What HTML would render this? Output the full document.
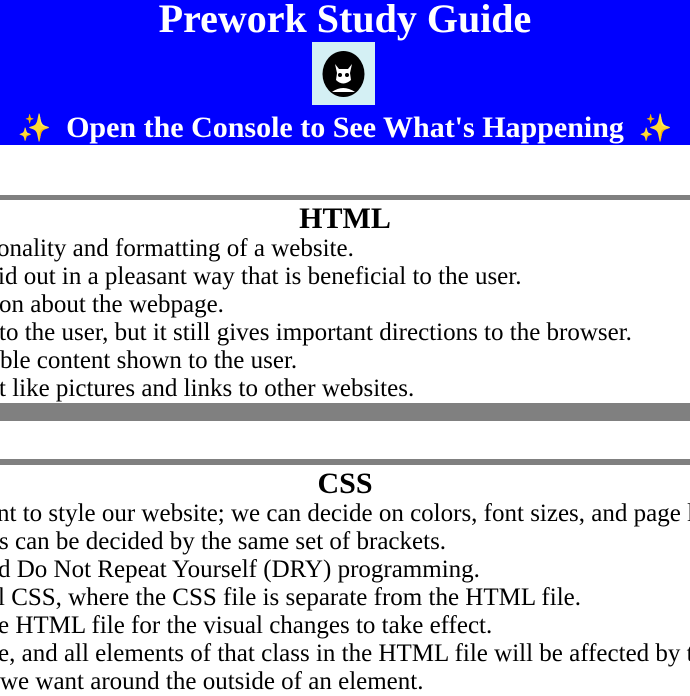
<!DOCTYPE html>
<html><head><meta charset="utf-8"><style>
html,body{margin:0;padding:0;width:690px;height:690px;overflow:hidden;background:#fff;font-family:"Liberation Serif",serif;color:#000}
.hdr{position:absolute;left:0;top:0;width:690px;height:145px;background:#0000ff;color:#fff;text-align:center}
.t1{position:absolute;left:0;width:690px;top:-4px;font-size:40px;font-weight:bold;line-height:46px}
.img{position:absolute;left:312px;top:42px;width:63px;height:63px;background:#d4f0f4}
.t2{position:absolute;left:0;width:690px;top:109px;font-size:30px;font-weight:bold;line-height:38px;white-space:nowrap}
.bar{position:absolute;left:0;width:690px;background:#808080}
.h{position:absolute;left:0;width:690px;text-align:center;font-weight:bold;font-size:30px;line-height:34px}
.l{position:absolute;white-space:nowrap;font-size:25px;line-height:28px}
.sp{color:#f7b733;font-size:27px}
</style></head><body>
<div class="hdr">
<div class="t1">Prework Study Guide</div>
<div class="img"><svg width="63" height="63" viewBox="0 0 63 63"><ellipse cx="31.5" cy="32" rx="21" ry="23" fill="#000"/><path d="M23 22 L25 31 L24 38 Q31 45 39 38 L38 31 L40 22 L36 27 L27 27 Z" fill="#fff"/><circle cx="28" cy="33" r="2" fill="#000"/><circle cx="35" cy="33" r="2" fill="#000"/><path d="M20 50 Q31 42 43 50 Z" fill="#fff"/></svg></div>
<div class="t2"><span class="sp">✨</span>&nbsp; Open the Console to See What's Happening &nbsp;<span class="sp">✨</span></div>
</div>
<div class="bar" style="top:195px;height:5px"></div>
<div class="h" style="top:202px">HTML</div>
<div class="l" style="left:-3px;top:235px">onality and formatting of a website.</div>
<div class="l" style="left:-2px;top:263px">id out in a pleasant way that is beneficial to the user.</div>
<div class="l" style="left:-1px;top:291px">on about the webpage.</div>
<div class="l" style="left:-1px;top:319px">to the user, but it still gives important directions to the browser.</div>
<div class="l" style="left:0px;top:347px">ble content shown to the user.</div>
<div class="l" style="left:-1px;top:375px">t like pictures and links to other websites.</div>
<div class="bar" style="top:403px;height:18px"></div>
<div class="bar" style="top:459px;height:6px"></div>
<div class="h" style="top:467px">CSS</div>
<div class="l" style="left:-3px;top:500px">nt to style our website; we can decide on colors, font sizes, and page l</div>
<div class="l" style="left:-1px;top:528px">s can be decided by the same set of brackets.</div>
<div class="l" style="left:-2px;top:556px">d Do Not Repeat Yourself (DRY) programming.</div>
<div class="l" style="left:-2px;top:584px">l CSS, where the CSS file is separate from the HTML file.</div>
<div class="l" style="left:-2px;top:612px">e HTML file for the visual changes to take effect.</div>
<div class="l" style="left:-2px;top:640px">e, and all elements of that class in the HTML file will be affected by t</div>
<div class="l" style="left:0px;top:668px">we want around the outside of an element.</div>
</body></html>
